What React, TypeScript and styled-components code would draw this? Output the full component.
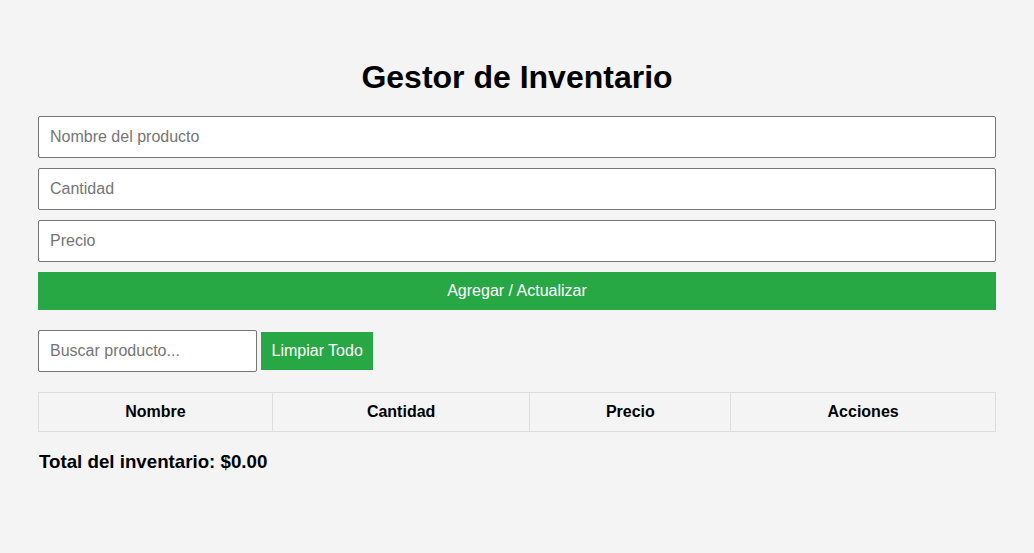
import React from "react";
import styled, { createGlobalStyle } from "styled-components";

const Global = createGlobalStyle`
  html, body { margin: 0; padding: 0; background: #f4f4f4; }
  body { font-family: "Liberation Sans", Arial, sans-serif; color: #000; }
  * { box-sizing: border-box; }
`;

const Page = styled.div`
  padding: 38px 38px 40px;
  background: #f4f4f4;
  min-height: 553px;
`;

const Title = styled.h1`
  text-align: center;
  font-size: 32px;
  font-weight: bold;
  margin: 21px 0 20px;
  line-height: normal;
`;

const Form = styled.div`
  display: flex;
  flex-direction: column;
  gap: 10px;
`;

const Field = styled.input`
  display: block;
  width: 100%;
  height: 42px;
  padding: 0 11px;
  font-family: "Liberation Sans", Arial, sans-serif;
  font-size: 16px;
  border: 1px solid #767676;
  border-radius: 2px;
  background: #fff;
  color: #000;
  outline: none;
  &::placeholder { color: #757575; }
`;

const Button = styled.button<{ $full?: boolean }>`
  height: 38px;
  width: ${(p) => (p.$full ? "100%" : "auto")};
  padding: 0 10.5px;
  background: #28a745;
  color: #fff;
  border: none;
  font-family: "Liberation Sans", Arial, sans-serif;
  font-size: 16px;
  cursor: pointer;
`;

const SearchRow = styled.div`
  display: flex;
  align-items: center;
  gap: 4px;
  margin-top: 20px;
`;

const SearchField = styled(Field)`
  width: 219px;
`;

const Table = styled.table`
  width: 100%;
  border-collapse: collapse;
  margin-top: 20px;
`;

const Th = styled.th<{ $w: number }>`
  width: ${(p) => p.$w}px;
  border: 1px solid #dddddd;
  height: 39px;
  padding: 0 10px;
  font-size: 16px;
  font-weight: bold;
  text-align: center;
`;

const Total = styled.h3`
  font-size: 18.72px;
  font-weight: bold;
  margin: 18.72px 0 0 1px;
  line-height: normal;
`;

export default function App() {
  return (
    <>
      <Global />
      <Page>
        <Title>Gestor de Inventario</Title>
        <Form>
          <Field placeholder="Nombre del producto" />
          <Field placeholder="Cantidad" />
          <Field placeholder="Precio" />
          <Button $full>Agregar / Actualizar</Button>
        </Form>
        <SearchRow>
          <SearchField placeholder="Buscar producto..." />
          <Button>Limpiar Todo</Button>
        </SearchRow>
        <Table>
          <thead>
            <tr>
              <Th $w={234}>Nombre</Th>
              <Th $w={258}>Cantidad</Th>
              <Th $w={201}>Precio</Th>
              <Th $w={265}>Acciones</Th>
            </tr>
          </thead>
          <tbody></tbody>
        </Table>
        <Total>Total del inventario: $0.00</Total>
      </Page>
    </>
  );
}
